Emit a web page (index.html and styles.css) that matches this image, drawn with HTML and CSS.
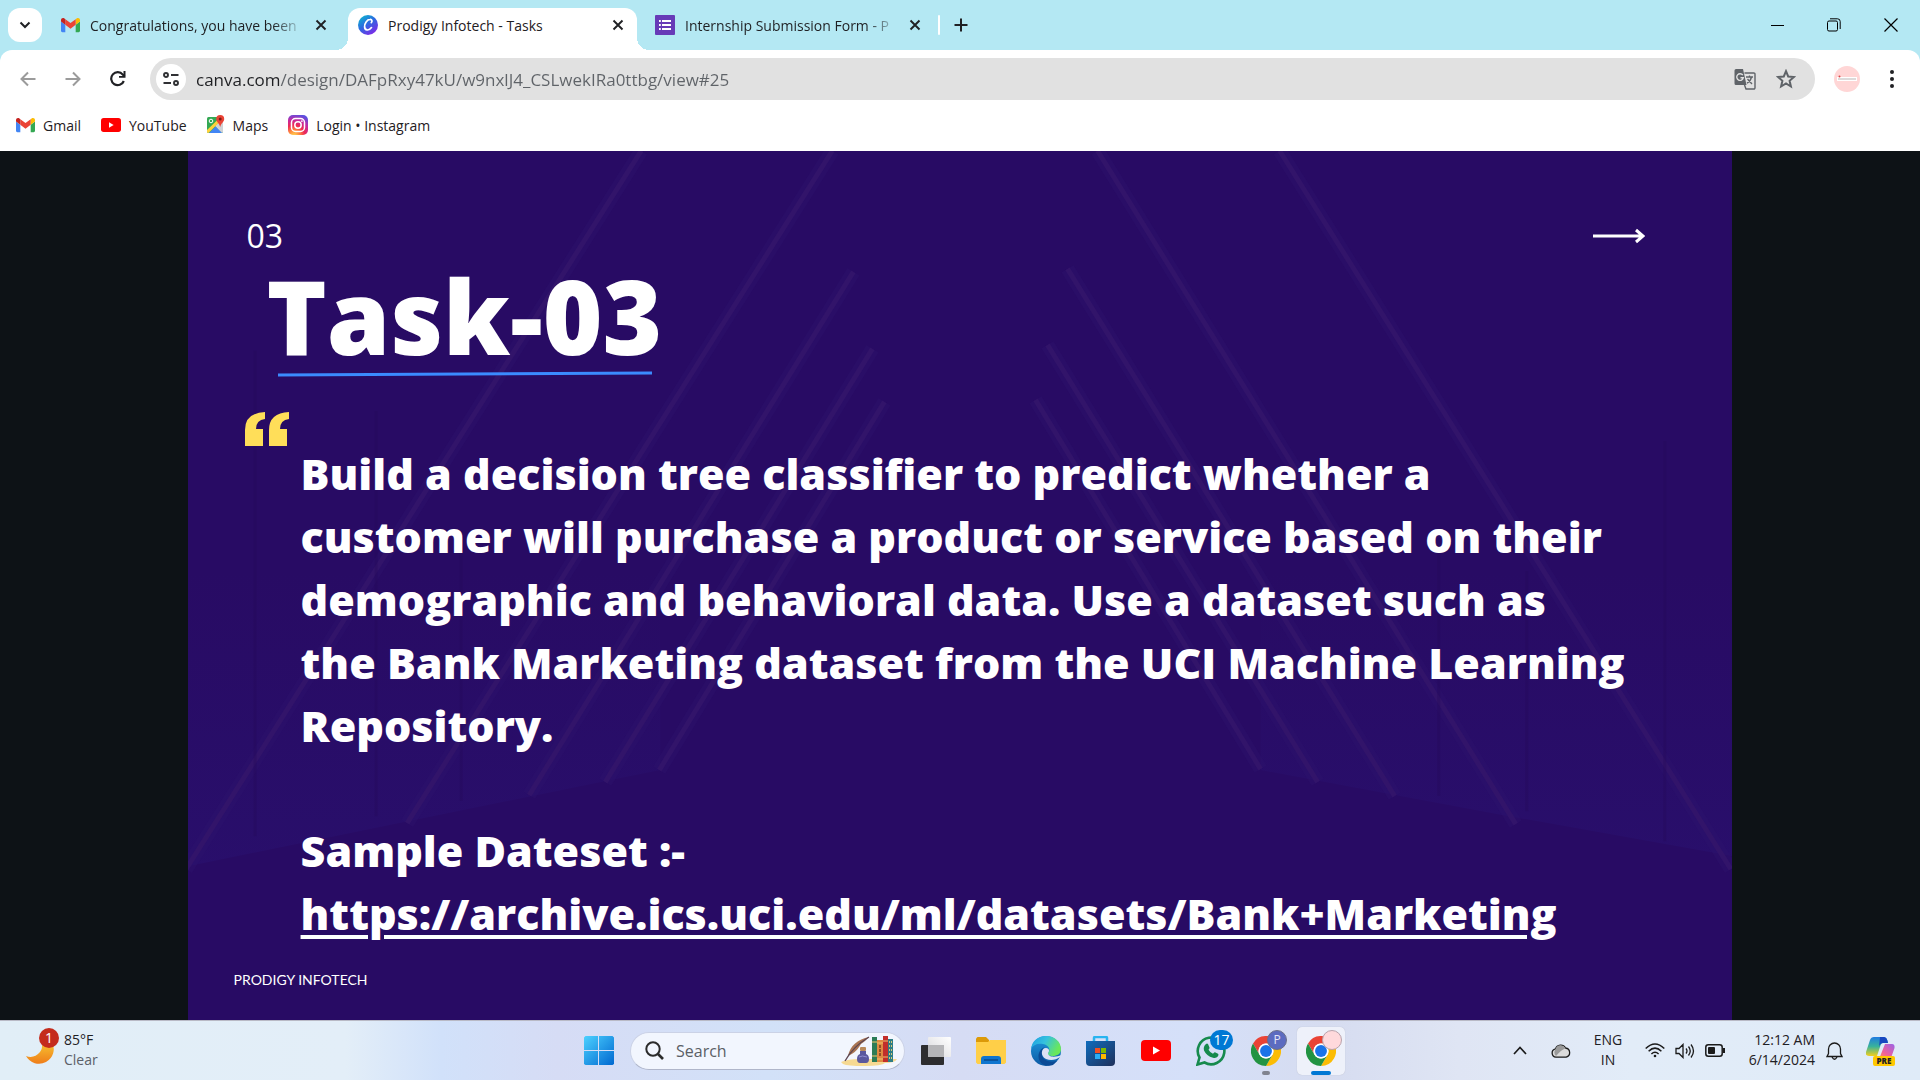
FILE: index.html
```html
<!DOCTYPE html>
<html lang="en">
<head>
<meta charset="utf-8">
<title>Prodigy Infotech - Tasks</title>
<link rel="stylesheet" href="styles.css">
</head>
<body>
<svg class="defs" width="0" height="0" aria-hidden="true">
  <defs>
    <symbol id="gmail" viewBox="52 42 88 66"><path fill="#4285f4" d="M58 108h14V74L52 59v43c0 3.3 2.7 6 6 6"/><path fill="#34a853" d="M120 108h14c3.300 0 6-2.700 6-6V59l-20 15"/><path fill="#fbbc04" d="M120 48v26l20-15v-8c0-7.400-8.500-11.600-14.400-7.200"/><path fill="#ea4335" d="M72 74V48l24 18 24-18v26L96 92"/><path fill="#c5221f" d="M52 51v8l20 15V48l-5.600-4.200c-5.900-4.400-14.400-.2-14.400 7.200"/></symbol>
    <symbol id="youtube" viewBox="0 0 30 21"><rect width="30" height="21" rx="4" fill="#f00"/><path d="M12 6.500v8l7-4z" fill="#fff"/></symbol>
    <symbol id="close" viewBox="0 0 12 12"><path d="M1.500 1.500l9 9m0-9l-9 9" stroke="#202124" stroke-width="1.900" fill="none"/></symbol>
    <symbol id="chrome" viewBox="0 0 48 48"><path fill="#ea4335" d="M24 12h20.800A24 24 0 0 0 3.200 12l10.400 18A12 12 0 0 1 24 12z"/><path fill="#fbbc04" d="M34.400 30L24 48A24 24 0 0 0 44.800 12H24a12 12 0 0 1 10.400 18z"/><path fill="#229342" d="M13.600 30L3.200 12A24 24 0 0 0 24 48l10.400-18a12 12 0 0 1-20.800 0z"/><circle cx="24" cy="24" r="12" fill="#fff"/><circle cx="24" cy="24" r="9.500" fill="#1a73e8"/></symbol>
  </defs>
</svg>

<header class="browser">
  <div class="tabstrip">
    <button class="tabsearch" aria-label="Search tabs"><svg width="12" height="12" viewBox="0 0 12 12"><path d="M1.500 3.500L6 8l4.500-4.500" fill="none" stroke="#202124" stroke-width="2"/></svg></button>
    <div class="tab">
      <svg width="19" height="16"><use href="#gmail"/></svg>
      <button class="tab-title fade">Congratulations, you have been</button>
      <button class="tab-close" aria-label="Close tab"><svg width="12" height="12"><use href="#close"/></svg></button>
    </div>
    <div class="tab active">
      <svg width="20" height="20" viewBox="0 0 20 20"><defs><linearGradient id="cv" x1="0" y1="0" x2=".7" y2="1"><stop offset="0" stop-color="#06c5cc"/><stop offset=".5" stop-color="#2b6be0"/><stop offset="1" stop-color="#7d2ae8"/></linearGradient></defs><circle cx="10" cy="10" r="10" fill="url(#cv)"/><path d="M13.300 7.600c1.200-1.200.8-3.400-1.300-3.200C9 4.600 6.500 8.500 6.600 11.600c.1 4 4.200 4.600 6.900 1" fill="none" stroke="#fff" stroke-width="1.700" stroke-linecap="round"/></svg>
      <button class="tab-title">Prodigy Infotech - Tasks</button>
      <button class="tab-close" aria-label="Close tab"><svg width="12" height="12"><use href="#close"/></svg></button>
    </div>
    <div class="tab">
      <svg width="20" height="20" viewBox="0 0 20 20"><rect width="20" height="20" rx="1" fill="#673ab7"/><path d="M7 6h9M7 10h9M7 14h9M4 6h1.800M4 10h1.800M4 14h1.800" stroke="#fff" stroke-width="2"/></svg>
      <button class="tab-title fade">Internship Submission Form - P</button>
      <button class="tab-close" aria-label="Close tab"><svg width="12" height="12"><use href="#close"/></svg></button>
    </div>
    <span class="tab-sep"></span>
    <button class="newtab" aria-label="New tab"><svg width="14" height="14" viewBox="0 0 14 14"><path d="M7 .5v13M.5 7h13" stroke="#202124" stroke-width="2"/></svg></button>
    <div class="window-controls">
      <button aria-label="Minimize"><svg width="14" height="14" viewBox="0 0 14 14"><path d="M1 7.500h13" stroke="#000"/></svg></button>
      <button aria-label="Restore"><svg width="14" height="14" viewBox="0 0 14 14" fill="none" stroke="#000"><rect x=".5" y="3" width="10" height="10" rx="1.500"/><path d="M3 .8h7.500a2.700 2.700 0 0 1 2.700 2.700V11"/></svg></button>
      <button aria-label="Close"><svg width="14" height="14" viewBox="0 0 14 14"><path d="M.5.5l13 13m0-13l-13 13" stroke="#000" stroke-width="1.200"/></svg></button>
    </div>
  </div>

  <div class="toolbar">
    <button class="nav" aria-label="Back"><svg width="16" height="16" viewBox="0 0 16 16"><path d="M15.500 8H1.500M8 1.500L1.500 8 8 14.500" fill="none" stroke="#9b9b9b" stroke-width="2"/></svg></button>
    <button class="nav" aria-label="Forward"><svg width="16" height="16" viewBox="0 0 16 16"><path d="M.5 8h14M8 1.500L14.500 8 8 14.500" fill="none" stroke="#9b9b9b" stroke-width="2"/></svg></button>
    <button class="nav" aria-label="Reload"><svg width="16" height="16" viewBox="0 0 16 16"><path d="M13.800 10A6.500 6.500 0 1 1 12.800 3.600L14.500 5.500" fill="none" stroke="#202124" stroke-width="2.200"/><path d="M15.500 0v6.700H9V4.900h4.500V0z" fill="#202124"/></svg></button>
    <div class="omnibox">
      <button class="tune" aria-label="View site information"><svg width="16" height="16" viewBox="0 0 16 16" fill="none" stroke="#303134" stroke-width="1.900"><circle cx="3" cy="4" r="2"/><path d="M8 4h7.500M.5 12H8"/><circle cx="13" cy="12" r="2"/></svg></button>
      <input class="url" type="text" aria-label="Address" value="canva.com/design/DAFpRxy47kU/w9nxlJ4_CSLwekIRa0ttbg/view#25">
      <button class="omni-btn" aria-label="Translate this page"><svg width="22" height="22" viewBox="0 0 22 22"><path d="M2 1h7l3.500 16H2a1.500 1.500 0 0 1-1.500-1.500v-13A1.500 1.500 0 0 1 2 1z" fill="#5f6368"/><path d="M8.800 7.200A3.300 3.300 0 1 0 9.300 9.700H6.500" fill="none" stroke="#e1e1e1" stroke-width="1.400"/><path d="M10.500 5h9.300a1.200 1.200 0 0 1 1.200 1.200v13.600a1.200 1.200 0 0 1-1.200 1.200H12l-1.500-4" fill="none" stroke="#5f6368" stroke-width="1.400"/><path d="M12 9h7M15.500 7.500V9m2 0c-.6 3-2.500 5-4.500 6.300M13.500 11l4.500 5" fill="none" stroke="#5f6368" stroke-width="1.300"/></svg></button>
      <button class="omni-btn" aria-label="Bookmark this tab"><svg width="20" height="20" viewBox="0 0 20 20"><path d="M10 2.200l2.200 5.300 5.700.5-4.300 3.800 1.300 5.700L10 14.500l-4.900 3 1.300-5.700L2.100 8l5.700-.5z" fill="none" stroke="#5f6368" stroke-width="2"/></svg></button>
    </div>
    <button class="avatar" aria-label="Profile"><svg width="26" height="26" viewBox="0 0 26 26"><circle cx="13" cy="13" r="13" fill="#ffd6d6"/><rect x="3" y="11" width="20" height="4" fill="#fff"/><path d="M4 13h18" stroke="#b9b4b4"/><circle cx="5.500" cy="10.500" r="1" fill="#d44"/></svg></button>
    <button class="menu" aria-label="Menu"><svg width="4" height="18" viewBox="0 0 4 18" fill="#202124"><circle cx="2" cy="2" r="2"/><circle cx="2" cy="9" r="2"/><circle cx="2" cy="16" r="2"/></svg></button>
  </div>

  <nav class="bookmarks">
    <a href="#gmail-link"><svg width="19" height="16"><use href="#gmail"/></svg>Gmail</a>
    <a href="#youtube-link"><svg width="20" height="16"><use href="#youtube"/></svg>YouTube</a>
    <a href="#maps-link"><svg width="18" height="20" viewBox="0 0 18 20"><rect y="2" width="16" height="16" rx="1.500" fill="#34a853"/><path d="M16 4v12.500a1.500 1.500 0 0 1-1.500 1.500L8 11z" fill="#cfd2d6"/><path d="M2 18l6.500-6.500L15 18z" fill="#4285f4"/><path d="M0 15L12.500 3l2 2L1.500 18A1.500 1.500 0 0 1 0 16.500z" fill="#fdd23c"/><circle cx="4" cy="6" r="1.800" fill="none" stroke="#fff"/><path d="M13.200 0a4 4 0 0 1 4 4c0 3-3.200 4.200-4 8-.8-3.800-4-5-4-8a4 4 0 0 1 4-4z" fill="#ea4335"/><circle cx="13.200" cy="4" r="1.500" fill="#7d1a14"/></svg>Maps</a>
    <a href="#instagram-link"><svg width="20" height="20" viewBox="0 0 20 20"><defs><radialGradient id="ig" cx=".3" cy="1.050" r="1.100"><stop offset="0" stop-color="#fd5"/><stop offset=".25" stop-color="#ff8a3c"/><stop offset=".5" stop-color="#ee2a55"/><stop offset=".75" stop-color="#c32aa3"/><stop offset="1" stop-color="#5b4fe0"/></radialGradient></defs><rect width="20" height="20" rx="5" fill="url(#ig)"/><rect x="3.500" y="3.500" width="13" height="13" rx="4" fill="none" stroke="#fff" stroke-width="1.500"/><circle cx="10" cy="10" r="3.200" fill="none" stroke="#fff" stroke-width="1.500"/><circle cx="13.900" cy="6.100" r=".9" fill="#fff"/></svg>Login • Instagram</a>
  </nav>
</header>

<main class="viewer">
  <article class="slide">
    <svg class="backdrop" viewBox="0 0 1544 869" preserveAspectRatio="xMidYMid slice" aria-hidden="true">
      <defs>
        <linearGradient id="haze" x1="0" y1="0" x2="0" y2="1"><stop offset="0" stop-color="#2a1578" stop-opacity="0"/><stop offset="1" stop-color="#2a1578" stop-opacity=".35"/></linearGradient>
      </defs>
      <path d="M0 420L472 420V619L220 670 0 715z" fill="url(#haze)"/>
      <path d="M1544 420L1072 420V619L1320 665 1544 705z" fill="url(#haze)"/>
      <g fill="none" stroke="#2e156e" stroke-width="14" opacity=".35">
        <path d="M-2 718L453 0M219 672L644 0M341 644L665 121M417 631L684 198M471 619L696 251"/>
        <path d="M1542 718L1091 0M1327 673L909 0M1206 645L879 118M1129 631L859 194M1072 618L847 249"/>
      </g>
      <g fill="none" stroke="#32146a" stroke-width="5">
        <path d="M-2 718L453 0M219 672L644 0M341 644L665 121M417 631L684 198M471 619L696 251"/>
        <path d="M1542 718L1091 0M1327 673L909 0M1206 645L879 118M1129 631L859 194M1072 618L847 249"/>
      </g>
      <g stroke="#250959" stroke-width="3" opacity=".35"><path d="M67 200V685M188 260V665M273 380V650M1338 420V660M1476 290V690M1250 400V645"/></g>
    </svg>
    <div class="slide-top">
      <span>03</span>
      <svg width="52" height="16" viewBox="0 0 52 16"><path d="M0 8h50M43 2l7 6-7 6" fill="none" stroke="#fff" stroke-width="3"/></svg>
    </div>
    <h1>Task-03</h1>
    <svg class="rule" width="374" height="6" viewBox="0 0 374 6"><path d="M0 4L374 2" stroke="#3b8bff" stroke-width="3"/></svg>
    <svg class="quote" width="44" height="34" viewBox="0 0 44 34" fill="#ffde59"><path id="q" d="M20 0v7q-9 1-9 10h7v17H0V18Q0 1 20 0z"/><use href="#q" x="24"/></svg>
    <p class="body">Build a decision tree classifier to predict whether a<br>customer will purchase a product or service based on their<br>demographic and behavioral data. Use a dataset such as<br>the Bank Marketing dataset from the UCI Machine Learning<br>Repository.</p>
    <p class="body sample">Sample Dateset :-<br><a href="https://archive.ics.uci.edu/ml/datasets/Bank+Marketing">https://archive.ics.uci.edu/ml/datasets/Bank+Marketing</a></p>
    <p class="brand">PRODIGY INFOTECH</p>
  </article>
</main>

<footer class="taskbar">
  <button class="weather">
    <span class="weather-icon">
      <svg width="28" height="24" viewBox="0 0 28 24"><defs><linearGradient id="mn" x1="0" y1="0" x2="0" y2="1"><stop offset="0" stop-color="#f7c531"/><stop offset="1" stop-color="#ef7d1a"/></linearGradient></defs><path d="M26 0A14 14 0 0 1 0 14q8 3 14-4 3-4 2-10z" fill="url(#mn)"/></svg>
      <span class="alert">1</span>
    </span>
    <span class="two-line"><span>85°F</span><span class="dim">Clear</span></span>
  </button>

  <div class="dock">
    <button class="tile" aria-label="Start"><svg width="30" height="30" viewBox="0 0 30 30"><defs><linearGradient id="wn" x1="0" y1="0" x2="1" y2="1"><stop offset="0" stop-color="#4cd1ff"/><stop offset="1" stop-color="#0068d0"/></linearGradient></defs><path d="M1.500 0H14v14H0V1.500zM15 0h13.500L30 1.500V14H15zM0 15h14v14H1.500L0 28zM15 15h15v13l-1.500 1H15z" fill="url(#wn)"/></svg></button>
    <label class="search">
      <svg width="19" height="19" viewBox="0 0 19 19"><circle cx="8" cy="8" r="6.700" fill="none" stroke="#2b2b2b" stroke-width="2"/><path d="M13 13l5 5" stroke="#2b2b2b" stroke-width="2.600"/></svg>
      <input type="text" placeholder="Search" aria-label="Search">
      <svg width="56" height="30" viewBox="0 0 56 30"><path d="M0 26q6-3 20-3h36q-2 4-12 4-3 3-20 3-18 0-22-2z" fill="#f6d992"/><path d="M28 1C17 3 9 10 7 20c7-3 10-7 13-12 3-2 5-4 8-7z" fill="#a87452"/><path d="M28 1C18 7 10 14 4 25" stroke="#5d4652" stroke-width="1.300" fill="none"/><rect x="19" y="11" width="6" height="4" rx="1" fill="#b98a5a"/><path d="M19 15h6v3q3 1 3 5 0 4-3 4h-6q-3 0-3-4 0-4 3-5z" fill="#5a589e"/><path d="M18 21q3-2 8 0" stroke="#8f8ed0" fill="none"/><rect x="31" y="1" width="5" height="25" fill="#2c7c56"/><rect x="36" y="4" width="6" height="22" fill="#e08a42"/><path d="M39 9v12" stroke="#7a3c1c" stroke-width="1.500" stroke-dasharray="3 1"/><rect x="42" y="0" width="5" height="26" fill="#c22f2b"/><path d="M42 5h5M42 21h5M31 6h5M31 20h5M36 7h6M36 23h6" stroke="#efc46b"/><rect x="47" y="3" width="5" height="23" fill="#2f7d84"/><path d="M48.500 5v20M50.500 5v20" stroke="#d9c777" stroke-dasharray="2 2"/></svg>
    </label>
    <button class="tile" aria-label="Task view"><svg width="30" height="28" viewBox="0 0 30 28"><defs><linearGradient id="tv" x1="1" y1="0" x2="0" y2="1"><stop offset="0" stop-color="#fff"/><stop offset="1" stop-color="#d8d8dc"/></linearGradient></defs><rect y="8" width="23" height="20" rx="1" fill="#2d2d2f"/><rect x="7" width="23" height="20" rx="1" fill="url(#tv)"/><path d="M7 8h16v12H8l-1-1z" fill="#b5b5b8"/></svg></button>
    <button class="tile" aria-label="File Explorer"><svg width="30" height="27" viewBox="0 0 30 27"><path d="M0 1.500L1.500 0H10l3 3v5H0z" fill="#dc9a08"/><path d="M0 5h12l2-2h16v22.500L28.500 27h-27L0 25.500z" fill="#ffcf48"/><path d="M5 27v-5q0-3 3-3h14q3 0 3 3v5z" fill="#0f75cf"/><path d="M8 23h14" stroke="#0a4a8c" stroke-width="1.500"/></svg></button>
    <button class="tile" aria-label="Edge"><svg width="30" height="30" viewBox="0 0 30 30"><defs><linearGradient id="ea" x1="0" y1="0" x2="1" y2=".4"><stop offset="0" stop-color="#1b9de2"/><stop offset=".5" stop-color="#35c1de"/><stop offset="1" stop-color="#6ae85a"/></linearGradient><linearGradient id="eb" x1="0" y1="0" x2="0" y2="1"><stop offset="0" stop-color="#1f9bdf"/><stop offset="1" stop-color="#0c59a4"/></linearGradient></defs><circle cx="15" cy="15" r="15" fill="url(#eb)"/><path d="M0 13C1 5 7 0 15 0c9 0 15 6 15 13 0 5-4 7-8 7-4 0-6-1-5-3 3-3 1-8-5-9C6 7 2 9 0 13z" fill="url(#ea)"/><path d="M12 13c-4 8 3 15 14 12l-4 4q-4 1.500-9 0C5 25 6 14 14 11z" fill="#0b4a95"/><path d="M17 17c2-2 1-5-2-5-5 0-6 8 0 11 5 2 10 1 14-2l1-2c-4 2-13 3-13-2z" fill="#dbe1f4"/></svg></button>
    <button class="tile" aria-label="Microsoft Store"><svg width="30" height="30" viewBox="0 0 30 30"><defs><linearGradient id="st" x1="0" y1="0" x2="1" y2="1"><stop offset="0" stop-color="#0f6cbd"/><stop offset="1" stop-color="#20305a"/></linearGradient></defs><path d="M8 7V2q0-1 1-1h11q1 0 1 1v5" fill="none" stroke="#28b4f0" stroke-width="2.500"/><path d="M0 5h29v21q0 4-4 4H4q-4 0-4-4z" fill="url(#st)"/><path d="M9 12h5v5H9z" fill="#f25022"/><path d="M15 12h5v5h-5z" fill="#7fba00"/><path d="M9 18h5v5H9z" fill="#2aaef5"/><path d="M15 18h5v5h-5z" fill="#ffb900"/></svg></button>
    <button class="tile" aria-label="YouTube"><svg width="30" height="21"><use href="#youtube"/></svg></button>
    <button class="tile" aria-label="WhatsApp"><svg width="30" height="30" viewBox="0 0 30 30"><path d="M1.500 28.500l2-7A13.300 13.300 0 1 1 8.500 26.500z" fill="none" stroke="#168a4d" stroke-width="2.600"/><path d="M10 8q1-1 2 0l1.500 3.500q.3.800-1 2.200 1.500 2.800 4.500 4 1.200-1.800 2-1.500l3 1.600q1 .7 0 2.500-2 2.500-5 1.500Q10.500 20 8 14.500 7 10.500 10 8z" fill="#168a4d"/></svg><span class="count">17</span></button>
    <button class="tile running" aria-label="Chrome"><svg width="30" height="30"><use href="#chrome"/></svg><span class="profile">P</span></button>
    <button class="tile current" aria-label="Chrome, active window"><svg width="30" height="30"><use href="#chrome"/></svg><span class="profile pink"></span></button>
  </div>

  <div class="tray">
    <button aria-label="Show hidden icons"><svg width="14" height="9" viewBox="0 0 14 9"><path d="M1 8l6-6.500L13 8" fill="none" stroke="#1b1b1b" stroke-width="1.700"/></svg></button>
    <button aria-label="OneDrive"><svg width="20" height="14" viewBox="0 0 20 14"><path d="M5 13.200a4.200 4.200 0 0 1-.5-8.300A5.500 5.500 0 0 1 14.500 4a4.700 4.700 0 0 1 .7 9.200z" fill="#dcdcdc" stroke="#1b1b1b" stroke-width="1.300"/><path d="M4.500 5A5.500 5.500 0 0 1 14.500 4.200Q10 6 5 12 2 9 4.500 5z" fill="#9a9a9a"/></svg></button>
    <button class="lang"><span>ENG</span><span>IN</span></button>
    <button class="status" aria-label="Network, sound and battery">
      <svg width="20" height="15" viewBox="0 0 20 15" fill="none" stroke="#1b1b1b" stroke-width="1.500"><path d="M.7 5.500Q10-3.500 19.300 5.500M3.600 8.300Q10 2 16.400 8.300M6.400 11Q10 7.500 13.600 11"/><circle cx="10" cy="13" r="1.300" fill="#1b1b1b" stroke="none"/></svg>
      <svg width="20" height="16" viewBox="0 0 20 16" fill="none" stroke="#1b1b1b" stroke-width="1.300"><path d="M1 5.500h3L8 1.500v13L4 10.500H1zM11 5.500q2 2.500 0 5M13.500 3.500q3.500 4.500 0 9M16 1.500q5 6.500 0 13"/></svg>
      <svg width="20" height="13" viewBox="0 0 20 13"><rect x=".8" y=".8" width="16.400" height="11.400" rx="2.500" fill="none" stroke="#1b1b1b" stroke-width="1.500"/><rect x="3" y="3" width="7" height="7" rx="1" fill="#1b1b1b"/><path d="M18 4h2v5h-2z" fill="#1b1b1b"/></svg>
    </button>
    <button class="clock"><span>12:12 AM</span><span>6/14/2024</span></button>
    <button aria-label="Notifications"><svg width="17" height="18" viewBox="0 0 17 18" fill="none" stroke="#1b1b1b" stroke-width="1.300"><path d="M1 14.500l1.500-3V7a6 6 0 0 1 12 0v4.500l1.500 3zM6 15q2.500 4.500 5 0"/></svg></button>
    <button class="copilot" aria-label="Copilot"><svg width="29" height="28" viewBox="0 0 29 28"><defs><linearGradient id="ca" x1="0" y1="0" x2="0" y2="1"><stop offset="0" stop-color="#1f7be0"/><stop offset=".5" stop-color="#39b39a"/><stop offset="1" stop-color="#f3cf1c"/></linearGradient><linearGradient id="cb" x1="1" y1="0" x2="0" y2="1"><stop offset="0" stop-color="#9a63e8"/><stop offset=".6" stop-color="#f0609a"/><stop offset="1" stop-color="#ff9a4a"/></linearGradient></defs><path d="M8 0h10q3 0 4 6h-5q-2 0-3 4l-3 9H3q-4 0-3-4L4 3q1-3 4-3z" fill="url(#ca)"/><path d="M14 0h4q3 0 4 6h-5q-3 0-4 4z" fill="#1747c0"/><path d="M19 7h7q3 0 2.500 4L25 21H11q3 0 4-4z" fill="url(#cb)"/></svg><span class="pre">PRE</span></button>
  </div>
</footer>
</body>
</html>
```
FILE: styles.css
```css
* { box-sizing: border-box; }
body {
  margin: 0;
  min-height: 100vh;
  display: flex;
  flex-direction: column;
  font-family: "Open Sans", "Noto Sans", sans-serif;
  font-size: 14px;
  color: #1f2023;
  background: #0d1216;
}
button, input {
  font: inherit;
  color: inherit;
  background: none;
  border: 0;
  padding: 0;
  margin: 0;
  outline: 0;
}
button { display: flex; align-items: center; justify-content: center; flex: none; }
svg { display: block; flex: none; }
.defs { position: absolute; }

/* Browser window */
.browser { background: #b4e8f3; }
.tabstrip { display: flex; height: 50px; padding: 8px 0 0 8px; }
.tabsearch { width: 34px; height: 34px; border-radius: 12px; background: #fff; }
.tab {
  display: flex;
  align-items: center;
  gap: 10px;
  width: 289px;
  height: 42px;
  padding: 0 13px 8px 10px;
  margin-left: 8px;
}
.tabsearch + .tab { margin-left: 9px; }
.tab.active {
  position: relative;
  background: #fff;
  border-radius: 12px 12px 0 0;
}
.tab.active::before, .tab.active::after {
  content: "";
  position: absolute;
  bottom: 0;
  width: 12px;
  height: 12px;
}
.tab.active::before { left: -12px; background: radial-gradient(circle at 0 0, transparent 12px, #fff 12px); }
.tab.active::after { right: -12px; background: radial-gradient(circle at 100% 0, transparent 12px, #fff 12px); }
.tab-title {
  flex: 1;
  justify-content: flex-start;
  overflow: hidden;
  white-space: nowrap;
  height: 24px;
}
.fade { mask-image: linear-gradient(90deg, #000 85%, transparent); }
.tab-close { width: 12px; height: 20px; }
.tab-sep { width: 2px; height: 20px; margin: 7px 14px 0 4px; background: #fff; border-radius: 1px; }
.newtab { width: 14px; height: 33px; }
.window-controls { display: flex; gap: 43px; margin: 0 22px 0 auto; height: 33px; }

.toolbar {
  display: flex;
  align-items: center;
  height: 58px;
  padding: 0 26px 0 20px;
  background: #fff;
  border-radius: 12px 12px 0 0;
}
.nav { width: 16px; height: 30px; margin-right: 29px; }
.nav:nth-child(3) { margin-right: 24px; }
.omnibox {
  flex: 1;
  display: flex;
  align-items: center;
  height: 42px;
  padding: 0 19px 0 6px;
  border-radius: 21px;
  background: #e1e1e1;
}
.tune { width: 30px; height: 30px; border-radius: 15px; background: #fff; margin-right: 10px; }
.url {
  flex: 1;
  min-width: 0;
  font-size: 17px;
  color: transparent;
  background: linear-gradient(90deg, #1f2023 84px, #5f6368 84px);
  -webkit-background-clip: text;
  background-clip: text;
}
.omni-btn + .omni-btn { margin-left: 20px; }
.avatar { margin-left: 19px; }
.menu { margin-left: 30px; }

.bookmarks {
  display: flex;
  align-items: center;
  gap: 20px;
  height: 43px;
  padding: 0 16px 9px;
  background: #fff;
}
.bookmarks a { display: flex; align-items: center; gap: 8px; color: inherit; text-decoration: none; }

/* Presentation: a 16:9 slide as tall as the space between the two bars */
.viewer { flex: 1; display: flex; justify-content: center; }
.slide {
  position: relative;
  display: flex;
  flex-direction: column;
  align-items: flex-start;
  width: calc((100vh - 211px) * 16 / 9);
  padding: 62px 87px 26px 46px;
  background: #280b64;
  color: #fff;
  overflow: hidden;
}
.slide > * { position: relative; }
.slide .backdrop { position: absolute; inset: 0; width: 100%; height: 100%; }
.slide-top {
  display: flex;
  align-items: center;
  justify-content: space-between;
  align-self: stretch;
  height: 46px;
  padding-left: 13px;
  font-size: 32px;
  line-height: 44px;
}
.slide h1 { margin: 2px 0 0 33px; font-size: 102px; line-height: 110px; font-weight: 800; }
.rule { margin: 0 0 35px 44px; }
.quote { margin-left: 11px; }
.body { margin: -4px 0 0 67px; font-size: 43px; line-height: 63px; font-weight: 800; white-space: nowrap; }
.sample { margin-top: 62px; }
.body a { color: inherit; text-decoration-thickness: 4px; text-underline-offset: 5px; }
.brand { margin: auto 0 0; font-family: Lato, "Open Sans", sans-serif; font-size: 14px; line-height: 28px; }

/* Taskbar */
.taskbar {
  display: grid;
  grid-template-columns: 1fr auto 1fr;
  align-items: center;
  height: 60px;
  border-top: 1px solid #b9bac6;
  background: linear-gradient(90deg, #e1eef7 0%, #e3eef8 18%, #d1e1fa 23%, #d6dcf5 29%, #d2e1f8 40%, #d6dcf4 50%, #d5e0f9 62%, #d6dcf0 69%, #dfe5f4 76%, #e2ecf8 85%, #dfebf8 100%);
}
.weather { justify-self: start; gap: 10px; margin-left: 26px; }
.weather-icon { position: relative; padding-top: 6px; }
.alert {
  position: absolute;
  left: 13px;
  top: -8px;
  width: 20px;
  height: 20px;
  border-radius: 10px;
  background: #c42b1c;
  color: #fff;
  line-height: 20px;
}
.two-line { display: flex; flex-direction: column; align-items: flex-start; line-height: 20px; padding-bottom: 2px; }
.dim { color: #5c6068; }
.dock { display: flex; align-items: center; gap: 7px; }
.tile { position: relative; width: 48px; height: 48px; border-radius: 5px; }
.current { background: #eef1fa; box-shadow: 0 0 1px #b0b4c4; }
.running::after, .current::after {
  content: "";
  position: absolute;
  bottom: 0;
  left: 20px;
  width: 8px;
  height: 4px;
  border-radius: 2px;
  background: #80838f;
}
.current::after { left: 14px; width: 20px; background: #0078d4; }
.search {
  display: flex;
  align-items: center;
  gap: 12px;
  width: 275px;
  height: 38px;
  padding: 0 7px 0 14px;
  border-radius: 19px;
  background: #f2f6fe;
  border: 1px solid #cbd2e6;
  border-bottom-color: #b0b6ca;
}
.search input { flex: 1; min-width: 0; font-size: 16px; }
.search input::placeholder { color: #5b5f66; opacity: 1; }
.count {
  position: absolute;
  left: 23px;
  top: 3px;
  width: 23px;
  height: 20px;
  border-radius: 10px;
  background: #0078d4;
  color: #fff;
  line-height: 20px;
}
.profile {
  position: absolute;
  left: 25px;
  top: 3px;
  width: 20px;
  height: 20px;
  border-radius: 10px;
  background: #5c6bc0;
  border: 1px solid #6b6f8a;
  color: #e4e6f7;
  font-size: 12px;
  line-height: 18px;
}
.pink { background: #ffd9dc; border-color: #b9a3ac; }
.tray { display: flex; align-items: center; justify-self: end; margin-right: 25px; }
.tray button { margin-left: 24px; }
.tray .lang { flex-direction: column; line-height: 20px; width: 30px; margin-left: 22px; padding-bottom: 2px; }
.tray .status { gap: 10px; margin-left: 22px; }
.tray .clock { flex-direction: column; align-items: flex-end; line-height: 20px; width: 70px; margin-left: 20px; padding-bottom: 2px; }
.tray .clock + button { margin-left: 11px; }
.tray .copilot { position: relative; margin-left: 23px; }
.pre {
  position: absolute;
  left: 7px;
  bottom: -1px;
  width: 22px;
  height: 10px;
  border-radius: 2px;
  background: #ffc800;
  font-size: 8px;
  line-height: 10px;
  font-weight: 800;
}
```
